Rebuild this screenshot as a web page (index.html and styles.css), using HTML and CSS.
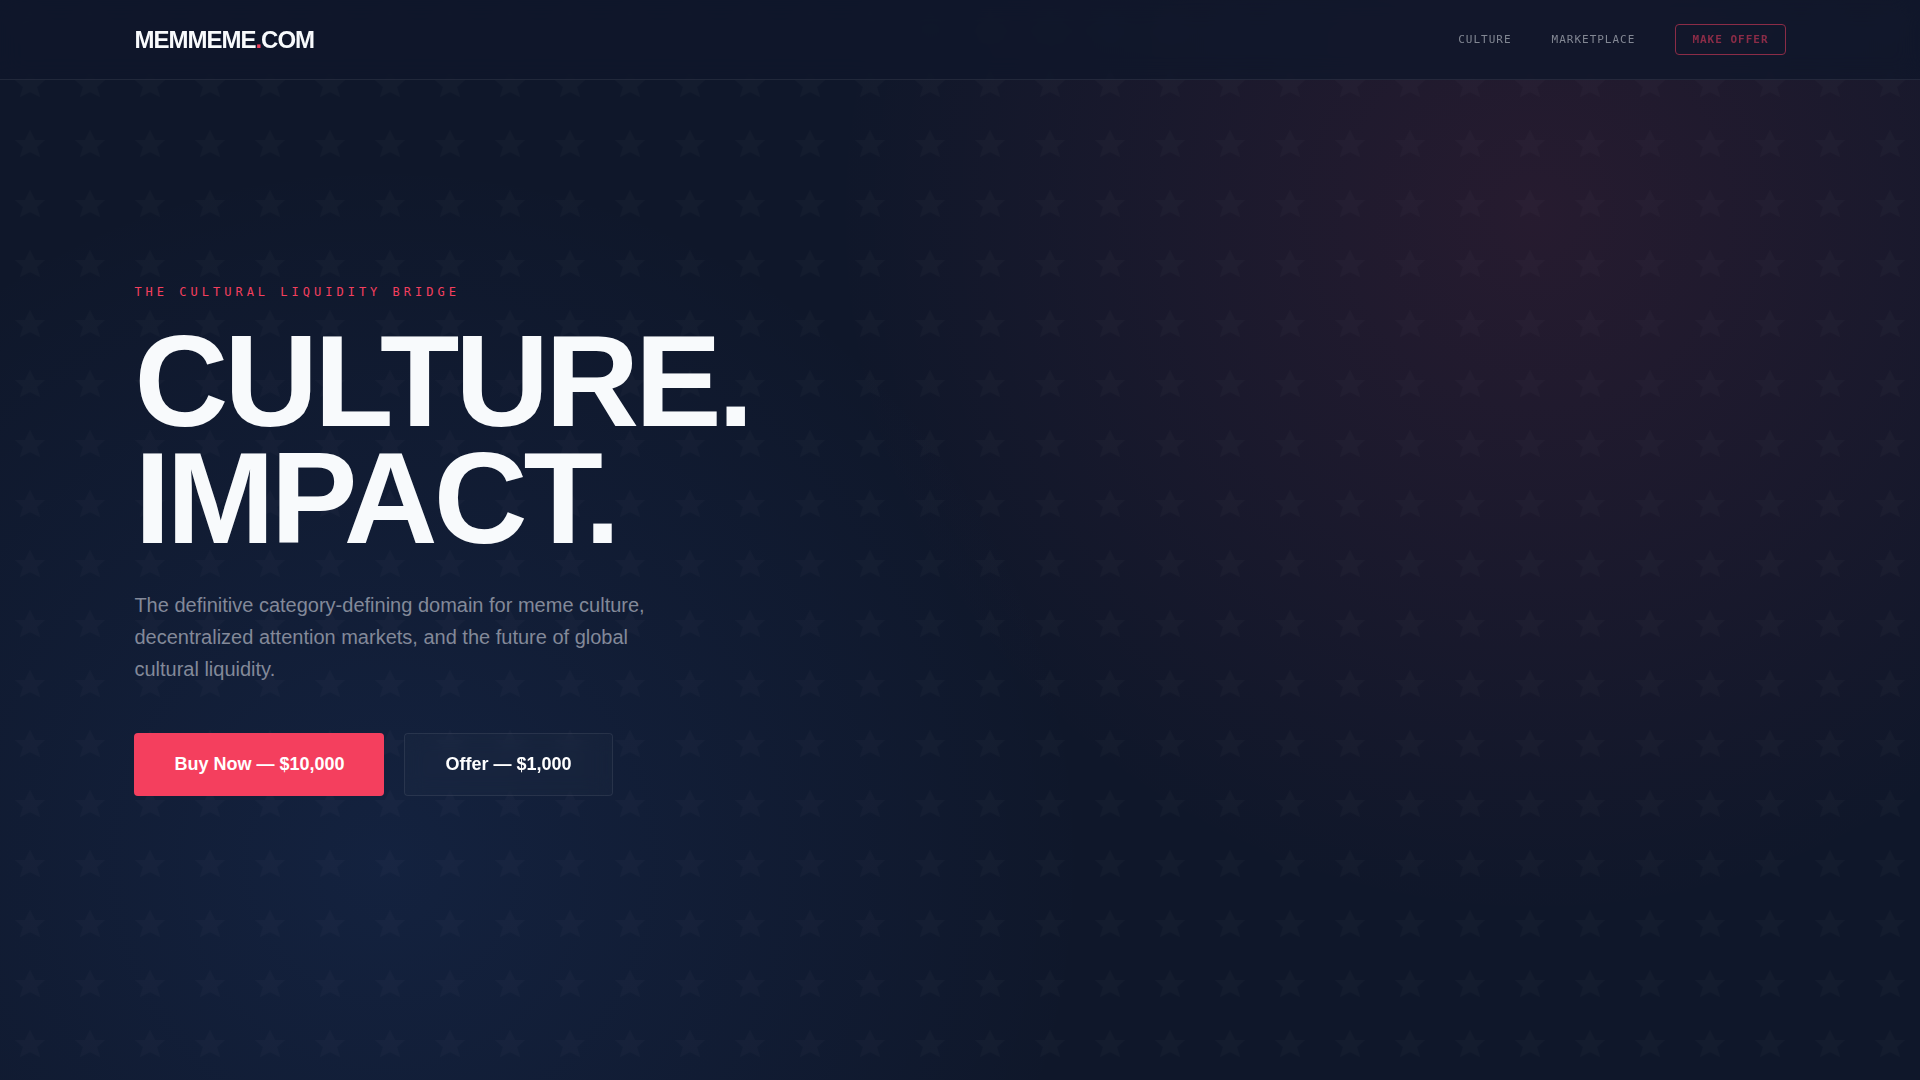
FILE: index.html
```html
<!DOCTYPE html>
<html lang="en">
<head>
    <meta charset="UTF-8">
    <meta name="viewport" content="width=device-width, initial-scale=1.0">
    <title>MEMMEME.COM</title>
    <link rel="stylesheet" href="styles.css">
</head>
<body>

<!-- Navigation -->
<header class="navbar">
    <a class="logo" href="#">MEMMEME<span>.</span>COM</a>
    <nav class="nav-links">
        <a href="#culture">CULTURE</a>
        <a href="#marketplace">MARKETPLACE</a>
        <a class="nav-offer" href="#offer">MAKE OFFER</a>
    </nav>
</header>

<!-- Hero -->
<main class="hero">
    <p class="eyebrow">THE CULTURAL LIQUIDITY BRIDGE</p>
    <h1>CULTURE.<br>IMPACT.</h1>
    <p class="lead">The definitive category-defining domain for meme culture, decentralized attention markets, and the future of global cultural liquidity.</p>
    <div class="actions">
        <button class="btn btn-primary" type="button">Buy Now — $10,000</button>
        <button class="btn btn-secondary" type="button">Offer — $1,000</button>
    </div>
</main>

</body>
</html>
```
FILE: styles.css
```css
* { box-sizing: border-box; margin: 0; padding: 0; }

body {
    font-family: "Liberation Sans", Arial, sans-serif;
    color: #f8fafc;
    background-color: #0f172a;
}

a { color: inherit; text-decoration: none; }

/* Navigation */
.navbar {
    position: fixed;
    top: 0;
    left: 0;
    right: 0;
    z-index: 10;
    display: flex;
    justify-content: space-between;
    align-items: center;
    height: 80px;
    padding: 0 7%;
    background: rgba(15, 23, 42, 0.8);
    backdrop-filter: blur(12px);
    border-bottom: 1px solid rgba(255, 255, 255, 0.08);
}
.logo { font-size: 24px; font-weight: bold; letter-spacing: -1px; }
.logo span { color: #f43f5e; }
.nav-links {
    display: flex;
    align-items: center;
    gap: 40px;
    font-family: "DejaVu Sans Mono", monospace;
    font-size: 11px;
    letter-spacing: 1px;
    color: #828793;
}
.nav-offer {
    padding: 8px 16px;
    border: 1px solid #8b2c47;
    border-radius: 4px;
    color: #8b2c47;
    font-weight: bold;
}

/* Hero */
.hero {
    display: flex;
    flex-direction: column;
    justify-content: center;
    align-items: flex-start;
    min-height: 100vh;
    padding: 80px 7% 80px;
    background:
        url("data:image/svg+xml,%3Csvg xmlns='http://www.w3.org/2000/svg' width='60' height='60'%3E%3Cpath d='M30 10l5 10h10l-8 7 3 10-10-5-10 5 3-10-8-7h10z' fill='%23fff' fill-opacity='.02'/%3E%3C/svg%3E"),
        radial-gradient(circle at 80% 20%, rgba(244, 63, 94, 0.1), transparent 40%),
        radial-gradient(circle at 20% 80%, rgba(59, 130, 246, 0.1), transparent 40%);
}
.eyebrow {
    margin-bottom: 24px;
    font-family: "DejaVu Sans Mono", monospace;
    font-size: 12px;
    letter-spacing: 4px;
    color: #f43f5e;
}
h1 {
    margin-bottom: 32px;
    font-size: 130px;
    line-height: 117px;
    letter-spacing: -4px;
}
.lead {
    max-width: 560px;
    margin-bottom: 48px;
    font-size: 20px;
    line-height: 32px;
    color: #838999;
}
.actions { display: flex; flex-wrap: wrap; gap: 20px; }
.btn {
    padding: 20px 40px;
    border: none;
    border-radius: 4px;
    font-family: inherit;
    font-size: 18px;
    font-weight: bold;
    color: #fff;
    cursor: pointer;
}
.btn-primary { background-color: #f43f5e; }
.btn-secondary {
    padding: 20px 40px;
    background: rgba(255, 255, 255, 0.02);
    border: 1px solid rgba(255, 255, 255, 0.08);
    backdrop-filter: blur(10px);
}
```
